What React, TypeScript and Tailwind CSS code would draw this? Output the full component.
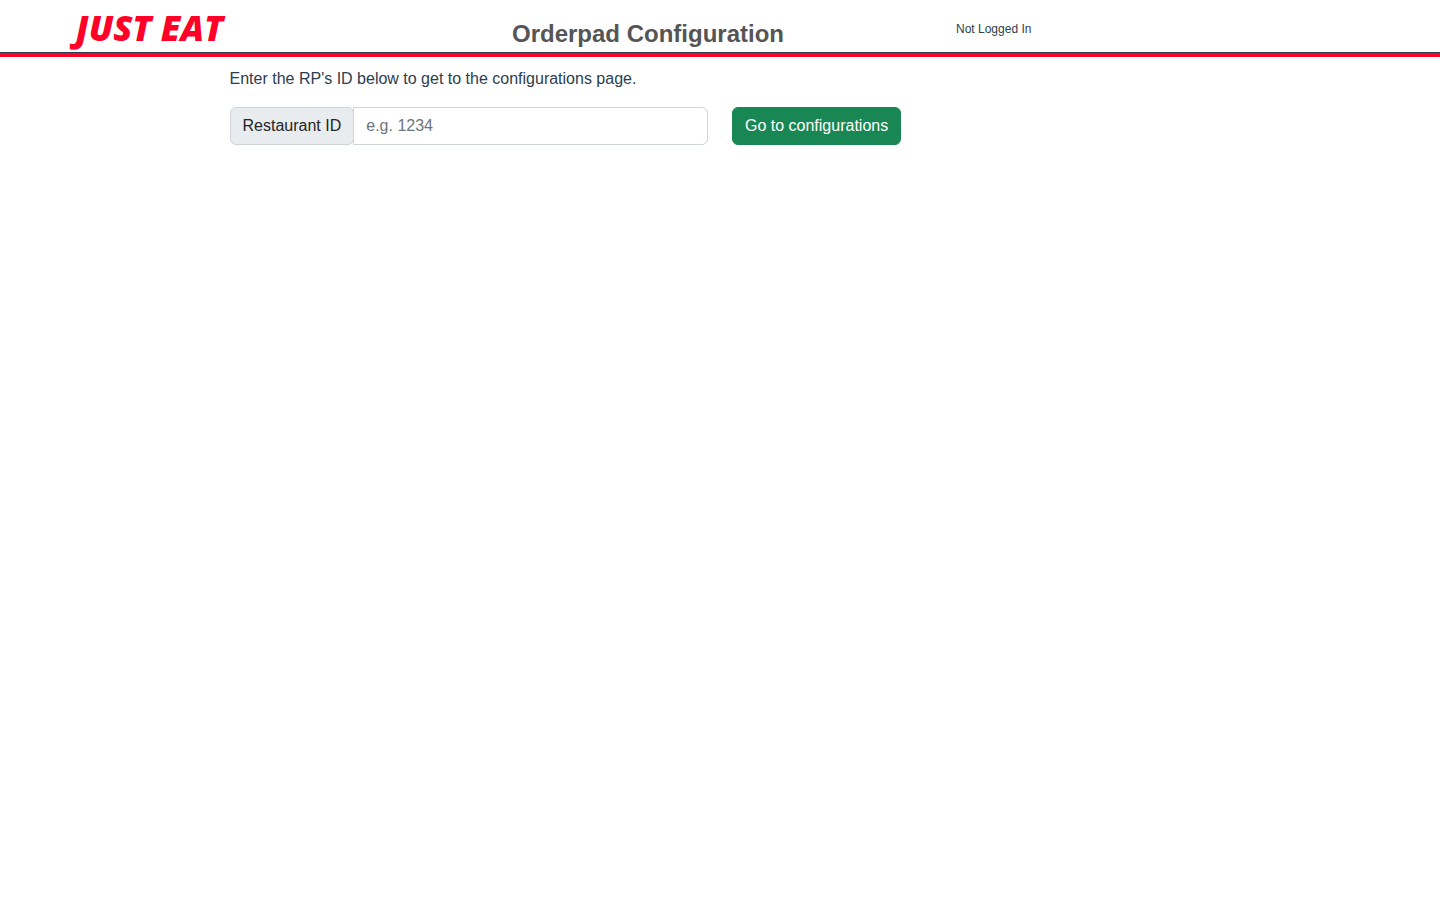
import { useState } from "react";

function Header() {
  return (
    <header className="grid h-[57px] grid-cols-[25%_40%_35%] border-b-4 border-[#ff0029] bg-white">
      <div className="col-span-3 grid grid-cols-subgrid border-b border-[#2c3e50]">
        <a
          href="/"
          className="ml-[21%] whitespace-nowrap pt-1 font-['Open_Sans','Noto_Sans',sans-serif] text-[35px] leading-[48px] font-extrabold text-[#ff0029] italic"
        >
          JUST EAT
        </a>
        <h1 className="pt-4 text-center text-2xl leading-9 font-bold text-[#555555]">
          Orderpad Configuration
        </h1>
        <p className="pt-5 pl-5 text-xs leading-[18px]">Not Logged In</p>
      </div>
    </header>
  );
}

export default function App() {
  const [restaurantId, setRestaurantId] = useState("");

  return (
    <div className="min-h-screen bg-white font-['Liberation_Sans',Arial,sans-serif] text-base text-[#2c3e50]">
      <Header />
      <main className="mx-auto w-[68.12%] pt-2.5">
        <p className="mb-4 leading-6">
          Enter the RP's ID below to get to the configurations page.
        </p>
        <form
          className="grid grid-cols-2 gap-6"
          onSubmit={(event) => event.preventDefault()}
        >
          <div className="flex">
            <label
              htmlFor="restaurant-id"
              className="rounded-md border border-[#ced4da] bg-[#e9ecef] px-3 py-1.5 leading-6 whitespace-nowrap text-[#212529]"
            >
              Restaurant ID
            </label>
            <input
              id="restaurant-id"
              type="text"
              placeholder="e.g. 1234"
              value={restaurantId}
              onChange={(event) => setRestaurantId(event.target.value)}
              className="-ml-px min-w-0 flex-1 rounded-r-md border border-[#ced4da] bg-white px-3 py-1.5 leading-6 text-[#212529] placeholder:text-[#6c757d]"
            />
          </div>
          <button
            type="submit"
            className="justify-self-start rounded-md border border-[#198754] bg-[#198754] px-3 py-1.5 leading-6 text-white"
          >
            Go to configurations
          </button>
        </form>
      </main>
    </div>
  );
}
